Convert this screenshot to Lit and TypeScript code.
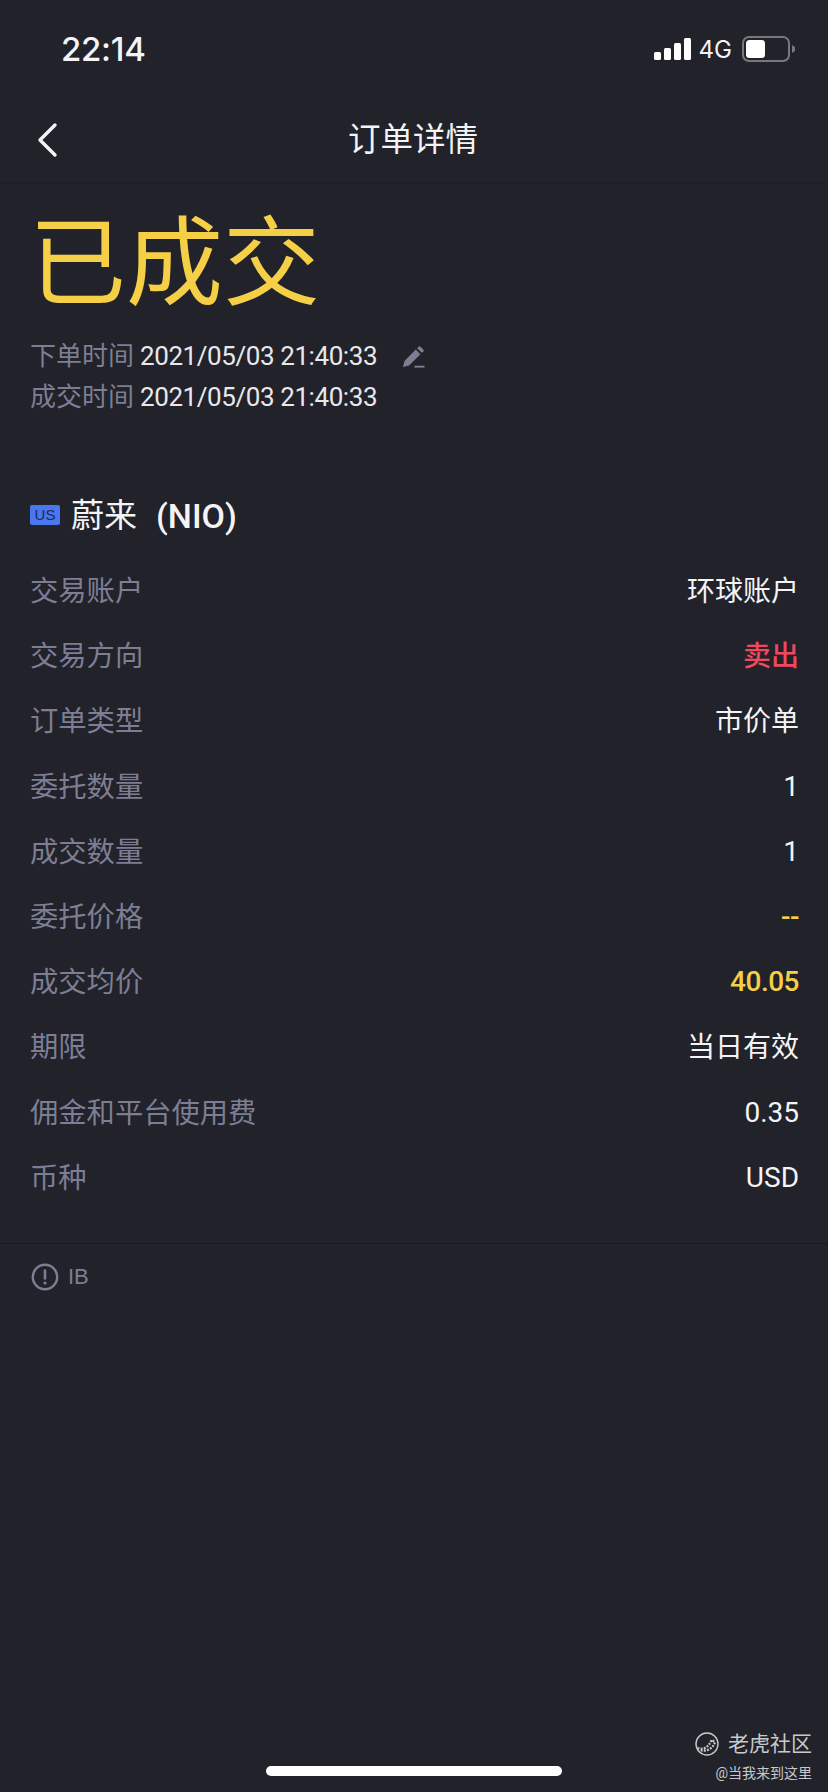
import {LitElement, html, css, svg} from 'lit';
import {customElement} from 'lit/decorators.js';

interface Row {
  label: string;
  value: string;
  tone?: 'sell' | 'gold' | 'plain';
}

const ROWS: Row[] = [
  {label: '交易账户', value: '环球账户'},
  {label: '交易方向', value: '卖出', tone: 'sell'},
  {label: '订单类型', value: '市价单'},
  {label: '委托数量', value: '1', tone: 'plain'},
  {label: '成交数量', value: '1', tone: 'plain'},
  {label: '委托价格', value: '--', tone: 'gold'},
  {label: '成交均价', value: '40.05', tone: 'gold'},
  {label: '期限', value: '当日有效'},
  {label: '佣金和平台使用费', value: '0.35', tone: 'plain'},
  {label: '币种', value: 'USD', tone: 'plain'},
];

const editIcon = svg`<svg class="edit" width="23" height="23" viewBox="0 0 24 24">
  <path d="M1 23l1.6-6.4L14.4 4.8l4.8 4.8L7.4 21.4z" fill="currentColor"/>
  <path d="M15.8 3.4l1.8-1.8a1 1 0 0 1 1.4 0l3.4 3.4a1 1 0 0 1 0 1.4l-1.8 1.8z" fill="currentColor"/>
  <rect x="13" y="21.6" width="10.5" height="2" fill="currentColor"/>
</svg>`;

@customElement('app-root')
export class AppRoot extends LitElement {
  static styles = css`
    :host {
      display: block;
      position: relative;
      width: 828px;
      height: 1792px;
      overflow: hidden;
      background: #21222a;
      color: #f4f4f6;
      font-family: Roboto, 'Noto Sans CJK SC', sans-serif;
    }
    .status {
      height: 98px;
      box-sizing: border-box;
      display: flex;
      justify-content: space-between;
      align-items: center;
      padding: 0 32px 0 61px;
    }
    .time {
      font-size: 33px;
      font-weight: 500;
      font-family: Inter, sans-serif;
      letter-spacing: -0.3px;
    }
    .status-right {
      display: flex;
      align-items: center;
      gap: 8px;
      font-family: Inter, sans-serif;
      font-size: 24px;
    }
    .battery {
      margin-left: 2px;
    }
    .nav {
      height: 86px;
      box-sizing: border-box;
      position: relative;
      display: flex;
      align-items: center;
      justify-content: center;
      border-bottom: 1px solid #1d1e26;
      padding: 0 2px 8px 0;
      font-size: 32.5px;
    }
    .back {
      position: absolute;
      left: 36px;
      top: 24px;
    }
    .state {
      color: #f5cf46;
      font-size: 97px;
      line-height: 124px;
      padding: 18px 0 0 29px;
    }
    .times {
      padding: 10px 30px 0;
      font-size: 26px;
      line-height: 41px;
    }
    .times div {
      display: flex;
      align-items: center;
      gap: 6px;
    }
    .times .date {
      letter-spacing: -0.42px;
      color: #e8e8ec;
    }
    .times .caption {
      color: #7d7e94;
    }
    .edit {
      color: #7d7e94;
      margin-left: 19px;
    }
    .stock {
      display: flex;
      align-items: center;
      padding: 74px 30px 0;
      font-size: 33px;
      line-height: 48px;
    }
    .badge {
      width: 30px;
      height: 20px;
      margin-top: -2px;
      background: #4a76f0;
      color: #1f2a55;
      font-size: 15px;
      line-height: 20px;
      text-align: center;
      font-family: 'Liberation Sans', sans-serif;
      border-radius: 2px;
      margin-right: 11px;
    }
    .code {
      margin-left: 19px;
      font-size: 34px;
      font-weight: 500;
    }
    .rows {
      display: grid;
      grid-auto-rows: 65.2px;
      padding: 16px 29px 0 30px;
      margin-bottom: 35px;
      font-size: 28px;
    }
    .row {
      display: flex;
      justify-content: space-between;
      align-items: center;
    }
    .label {
      color: #7d7e94;
      font-size: 28.3px;
    }
    .value {
      font-weight: 400;
    }
    .plain {
      padding-top: 4px;
    }
    .sell {
      color: #f0485f;
      font-weight: 500;
    }
    .gold {
      color: #f5cf46;
      font-weight: 500;
      letter-spacing: -0.5px;
      padding-top: 3px;
    }
    .note {
      border-top: 1px solid #191a22;
      display: flex;
      align-items: center;
      gap: 9px;
      padding: 19px 31px;
      color: #7d7e94;
      font-size: 22px;
      font-family: 'Liberation Sans', sans-serif;
    }
    .mark {
      position: absolute;
      right: 16px;
      top: 1729px;
      display: flex;
      flex-direction: column;
      align-items: flex-end;
      color: #c9c9cc;
    }
    .mark-top {
      display: flex;
      align-items: center;
      gap: 9px;
      font-size: 21px;
      line-height: 30px;
    }
    .mark-user {
      font-size: 14px;
      line-height: 22px;
      margin-top: 3px;
    }
    .home {
      position: absolute;
      left: 266px;
      top: 1766px;
      width: 296px;
      height: 10px;
      border-radius: 5px;
      background: #fff;
    }
  `;

  render() {
    return html`
      <div class="status">
        <div class="time">22:14</div>
        <div class="status-right">
          <svg width="37" height="24" viewBox="0 0 37 24" fill="#fff">
            <rect x="0" y="15" width="7" height="8" rx="1.5"/>
            <rect x="10" y="11" width="7" height="12" rx="1.5"/>
            <rect x="20" y="6" width="7" height="17" rx="1.5"/>
            <rect x="30" y="1" width="7" height="22" rx="1.5"/>
          </svg>
          <span>4G</span>
          <svg class="battery" width="54" height="26" viewBox="0 0 54 26">
            <rect x="1" y="1" width="46" height="24" rx="6" fill="none" stroke="#77787e" stroke-width="2"/>
            <rect x="4" y="4" width="19" height="18" rx="3.5" fill="#fff"/>
            <path d="M50 9l3 2v4l-3 2z" fill="#77787e"/>
          </svg>
        </div>
      </div>
      <div class="nav">
        <svg class="back" width="24" height="36" viewBox="0 0 24 36">
          <path d="M19 3L4 18l15 15" fill="none" stroke="#f4f4f6" stroke-width="3.4" stroke-linecap="round" stroke-linejoin="round"/>
        </svg>
        订单详情
      </div>
      <div class="state">已成交</div>
      <div class="times">
        <div><span class="caption">下单时间</span><span class="date">2021/05/03 21:40:33</span>${editIcon}</div>
        <div><span class="caption">成交时间</span><span class="date">2021/05/03 21:40:33</span></div>
      </div>
      <div class="stock">
        <div class="badge">US</div>
        <div>蔚来</div>
        <div class="code">(NIO)</div>
      </div>
      <div class="rows">
        ${ROWS.map(
          (r) => html`<div class="row">
            <div class="label">${r.label}</div>
            <div class="value ${r.tone ?? ''}">${r.value}</div>
          </div>`
        )}
      </div>
      <div class="note">
        <svg width="28" height="28" viewBox="0 0 28 28">
          <circle cx="14" cy="14" r="12.2" fill="none" stroke="#7d7e94" stroke-width="2.4"/>
          <path d="M14 7.5v8" stroke="#7d7e94" stroke-width="2.6" stroke-linecap="round"/>
          <circle cx="14" cy="20" r="1.6" fill="#7d7e94"/>
        </svg>
        <span>IB</span>
      </div>
      <div class="mark">
        <div class="mark-top">
          <svg width="24" height="24" viewBox="0 0 24 24" fill="none" stroke="#c9c9cc">
            <circle cx="12" cy="12" r="11" stroke-width="1.4"/>
            <path d="M2.5 16c5 2 11 0 14-8l3.5 2c-2 7-9 10-15 8" stroke-width="2.2" stroke-dasharray="2 1.2"/>
          </svg>
          老虎社区
        </div>
        <div class="mark-user">@当我来到这里</div>
      </div>
      <div class="home"></div>
    `;
  }
}
